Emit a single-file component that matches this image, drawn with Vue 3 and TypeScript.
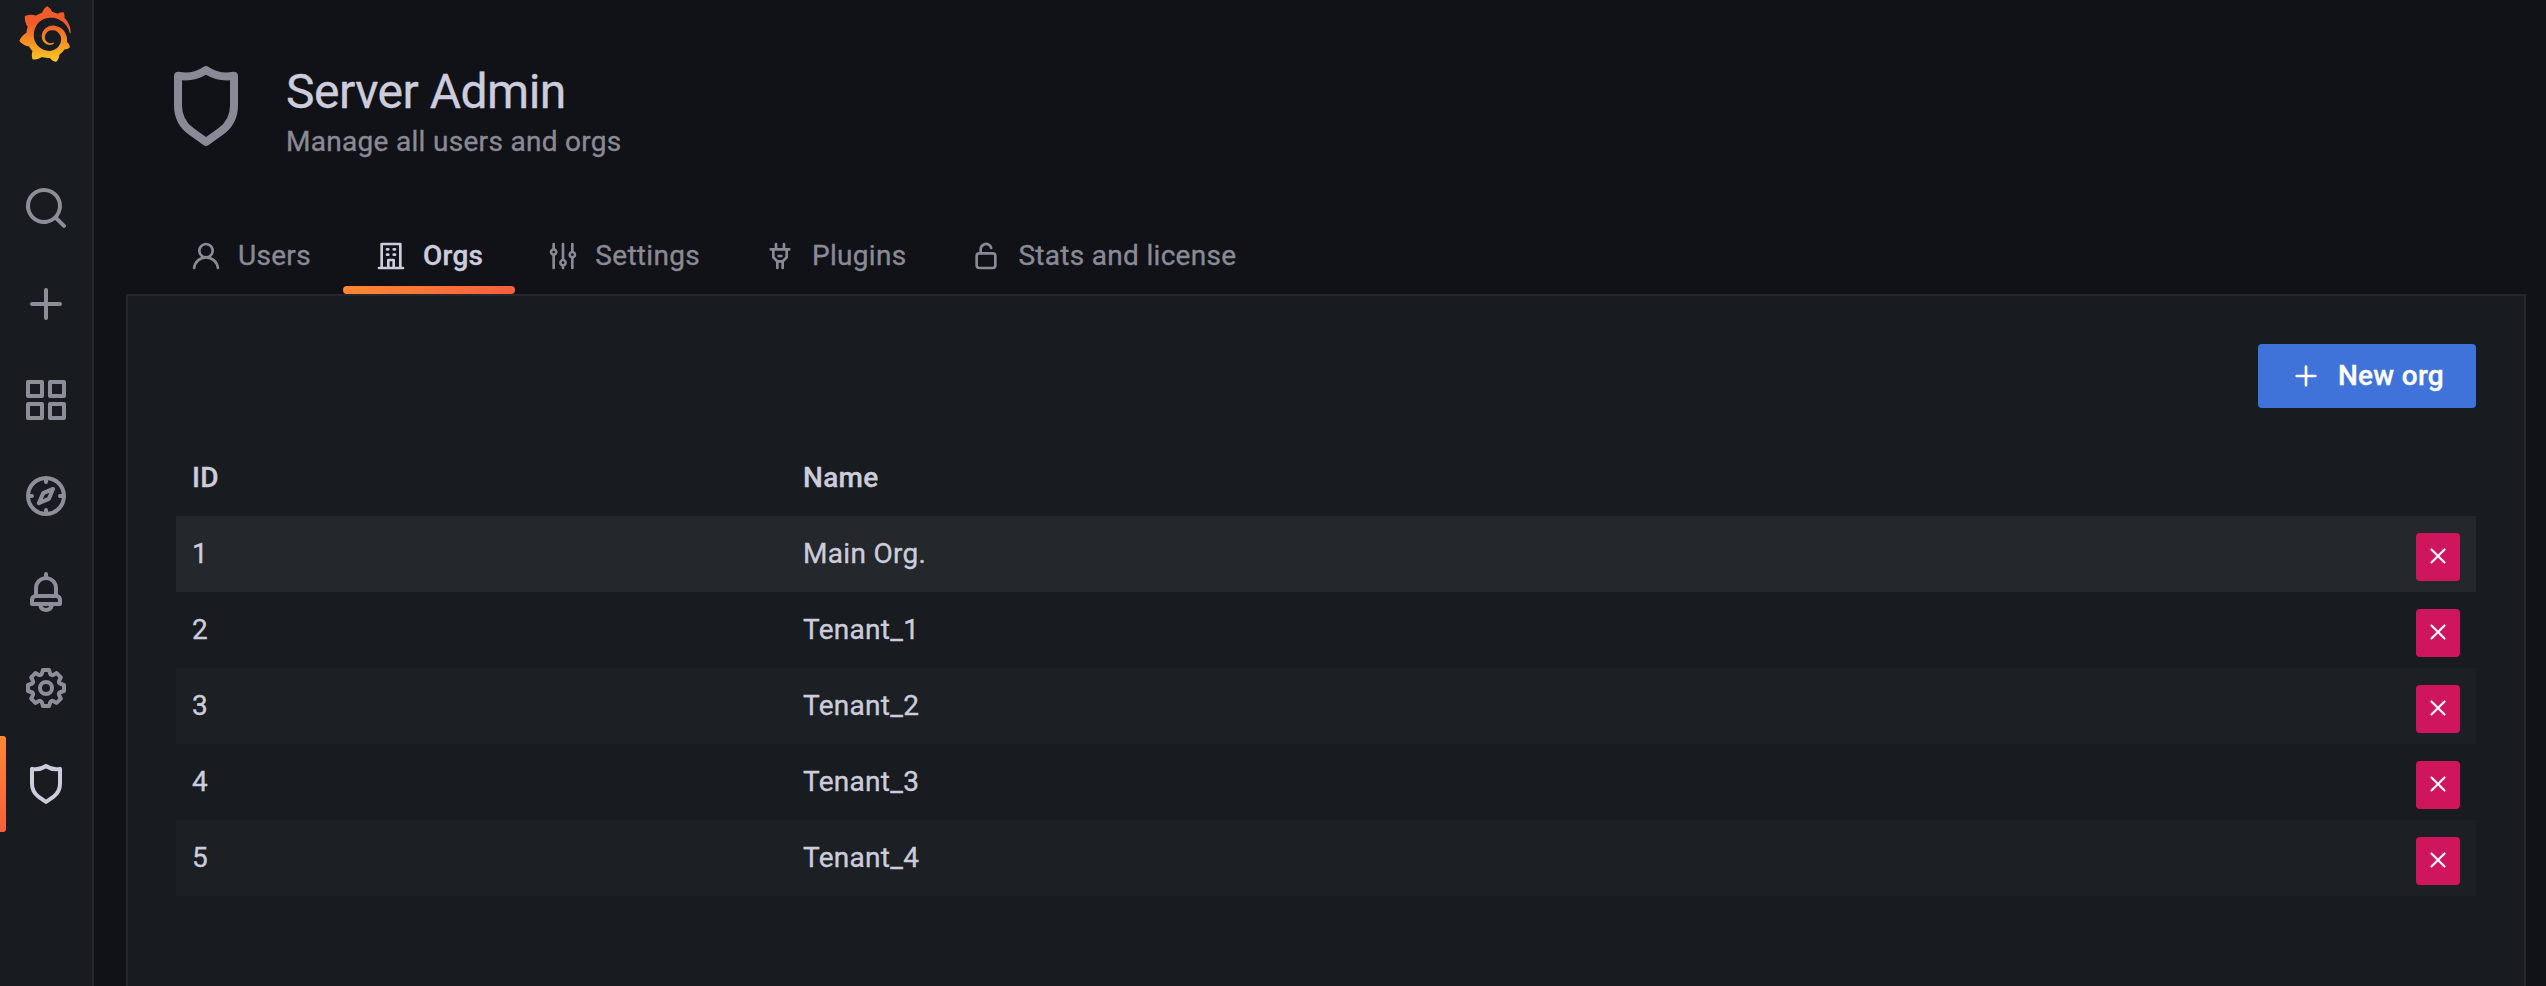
<script setup lang="ts">
interface Tab {
  label: string
  icon: string
  active?: boolean
}

interface Org {
  id: number
  name: string
}

const icons: Record<string, string> = {
  search:
    'M21.71,20.29,18,16.61A9,9,0,1,0,16.61,18l3.68,3.68a1,1,0,0,0,1.42,0A1,1,0,0,0,21.71,20.29ZM11,18a7,7,0,1,1,7-7A7,7,0,0,1,11,18Z',
  plus: 'M19,11H13V5a1,1,0,0,0-2,0v6H5a1,1,0,0,0,0,2h6v6a1,1,0,0,0,2,0V13h6a1,1,0,0,0,0-2Z',
  apps: 'M10,13H3a1,1,0,0,0-1,1v7a1,1,0,0,0,1,1h7a1,1,0,0,0,1-1V14A1,1,0,0,0,10,13ZM9,20H4V15H9ZM21,2H14a1,1,0,0,0-1,1v7a1,1,0,0,0,1,1h7a1,1,0,0,0,1-1V3A1,1,0,0,0,21,2ZM20,9H15V4h5Zm1,4H14a1,1,0,0,0-1,1v7a1,1,0,0,0,1,1h7a1,1,0,0,0,1-1V14A1,1,0,0,0,21,13Zm-1,7H15V15h5ZM10,2H3A1,1,0,0,0,2,3v7a1,1,0,0,0,1,1h7a1,1,0,0,0,1-1V3A1,1,0,0,0,10,2ZM9,9H4V4H9Z',
  compass:
    'M12,2A10,10,0,1,0,22,12,10,10,0,0,0,12,2Zm1,17.93V19a1,1,0,0,0-2,0v.93A8,8,0,0,1,4.07,13H5a1,1,0,0,0,0-2H4.07A8,8,0,0,1,11,4.07V5a1,1,0,0,0,2,0V4.07A8,8,0,0,1,19.93,11H19a1,1,0,0,0,0,2h.93A8,8,0,0,1,13,19.93ZM15.14,7.55l-5,2.12a1,1,0,0,0-.52.52l-2.12,5a1,1,0,0,0,.21,1.1,1,1,0,0,0,.7.3.93.93,0,0,0,.4-.09l5-2.12a1,1,0,0,0,.52-.52l2.12-5a1,1,0,0,0-1.31-1.31Zm-2.49,5.1-2.28,1,1-2.28,2.28-1Z',
  bell: 'M18,13.18V10a6,6,0,0,0-5-5.91V3a1,1,0,0,0-2,0V4.09A6,6,0,0,0,6,10v3.18A3,3,0,0,0,4,16v2a1,1,0,0,0,1,1H8.14a4,4,0,0,0,7.72,0H19a1,1,0,0,0,1-1V16A3,3,0,0,0,18,13.18ZM8,10a4,4,0,0,1,8,0v3H8Zm4,10a2,2,0,0,1-1.72-1h3.44A2,2,0,0,1,12,20Zm6-3H6V16a1,1,0,0,1,1-1H17a1,1,0,0,1,1,1Z',
  cog: 'M21.32,9.55l-1.89-.63.89-1.78A1,1,0,0,0,20.13,6L18,3.87a1,1,0,0,0-1.15-.19l-1.78.89-.63-1.89A1,1,0,0,0,13.5,2h-3a1,1,0,0,0-.95.68L8.92,4.57,7.14,3.68A1,1,0,0,0,6,3.87L3.87,6a1,1,0,0,0-.19,1.15l.89,1.78-1.89.63A1,1,0,0,0,2,10.5v3a1,1,0,0,0,.68.95l1.89.63-.89,1.78A1,1,0,0,0,3.87,18L6,20.13a1,1,0,0,0,1.15.19l1.78-.89.63,1.89a1,1,0,0,0,.95.68h3a1,1,0,0,0,.95-.68l.63-1.89,1.78.89A1,1,0,0,0,18,20.13L20.13,18a1,1,0,0,0,.19-1.15l-.89-1.78,1.89-.63A1,1,0,0,0,22,13.5v-3A1,1,0,0,0,21.32,9.55ZM20,12.78l-1.2.4A2,2,0,0,0,17.64,16l.57,1.14-1.1,1.1L16,17.64a2,2,0,0,0-2.79,1.16l-.4,1.2H11.22l-.4-1.2A2,2,0,0,0,8,17.64l-1.14.57-1.1-1.1L6.36,16A2,2,0,0,0,5.2,13.18L4,12.78V11.22l1.2-.4A2,2,0,0,0,6.36,8L5.79,6.89l1.1-1.1L8,6.36A2,2,0,0,0,10.82,5.2l.4-1.2h1.56l.4,1.2A2,2,0,0,0,16,6.36l1.14-.57,1.1,1.1L17.64,8a2,2,0,0,0,1.16,2.79l1.2.4ZM12,8a4,4,0,1,0,4,4A4,4,0,0,0,12,8Zm0,6a2,2,0,1,1,2-2A2,2,0,0,1,12,14Z',
  shield:
    'M19.63,3.65a1,1,0,0,0-.84-.2,8,8,0,0,1-6.22-1.27,1,1,0,0,0-1.14,0A8,8,0,0,1,5.21,3.45a1,1,0,0,0-.84.2A1,1,0,0,0,4,4.43v7.45a9,9,0,0,0,3.77,7.33l3.65,2.6a1,1,0,0,0,1.16,0l3.65-2.6A9,9,0,0,0,20,11.88V4.43A1,1,0,0,0,19.63,3.65ZM18,11.88a7,7,0,0,1-2.93,5.7L12,19.77,8.93,17.58A7,7,0,0,1,6,11.88V5.58a10,10,0,0,0,6-1.39,10,10,0,0,0,6,1.39Z',
  user: 'M15.71,12.71a6,6,0,1,0-7.42,0,10,10,0,0,0-6.22,8.18,1,1,0,0,0,2,.22,8,8,0,0,1,15.9,0,1,1,0,0,0,1,.89h.11a1,1,0,0,0,.88-1.1A10,10,0,0,0,15.71,12.71ZM12,12a4,4,0,1,1,4-4A4,4,0,0,1,12,12Z',
  building:
    'M14,8h1a1,1,0,0,0,0-2H14a1,1,0,0,0,0,2Zm0,4h1a1,1,0,0,0,0-2H14a1,1,0,0,0,0,2ZM9,8h1a1,1,0,0,0,0-2H9A1,1,0,0,0,9,8Zm0,4h1a1,1,0,0,0,0-2H9a1,1,0,0,0,0,2Zm12,8H20V3a1,1,0,0,0-1-1H5A1,1,0,0,0,4,3V20H3a1,1,0,0,0,0,2H21a1,1,0,0,0,0-2Zm-8,0H11V16h2Zm5,0H15V15a1,1,0,0,0-1-1H10a1,1,0,0,0-1,1v5H6V4H18Z',
  sliders:
    'M20,8.18V3a1,1,0,0,0-2,0V8.18a3,3,0,0,0,0,5.64V21a1,1,0,0,0,2,0V13.82a3,3,0,0,0,0-5.64ZM19,12a1,1,0,1,1,1-1A1,1,0,0,1,19,12Zm-6,2.18V3a1,1,0,0,0-2,0V14.18a3,3,0,0,0,0,5.64V21a1,1,0,0,0,2,0V19.82a3,3,0,0,0,0-5.64ZM12,18a1,1,0,1,1,1-1A1,1,0,0,1,12,18ZM6,6.18V3A1,1,0,0,0,4,3V6.18a3,3,0,0,0,0,5.64V21a1,1,0,0,0,2,0V11.82A3,3,0,0,0,6,6.18ZM5,10A1,1,0,1,1,6,9,1,1,0,0,1,5,10Z',
  plug: 'M19,6H16V3a1,1,0,0,0-2,0V6H10V3A1,1,0,0,0,8,3V6H5A1,1,0,0,0,5,8H6v5a1,1,0,0,0,.29.71L9,16.41V21a1,1,0,0,0,2,0V17h2v4a1,1,0,0,0,2,0V16.41l2.71-2.7A1,1,0,0,0,18,13V8h1a1,1,0,0,0,0-2Zm-3,6.59L13.59,15H10.41L8,12.59V8h8ZM11,13h2a1,1,0,0,0,0-2H11a1,1,0,0,0,0,2Z',
  unlock:
    'M17,9H9V7a3,3,0,0,1,5.12-2.13,3.08,3.08,0,0,1,.78,1.38,1,1,0,1,0,1.94-.5,5.09,5.09,0,0,0-1.31-2.29A5,5,0,0,0,7,7V9a3,3,0,0,0-3,3v7a3,3,0,0,0,3,3H17a3,3,0,0,0,3-3V12A3,3,0,0,0,17,9Zm1,10a1,1,0,0,1-1,1H7a1,1,0,0,1-1-1V12a1,1,0,0,1,1-1H17a1,1,0,0,1,1,1Z',
  times:
    'M13.41,12l6.3-6.29a1,1,0,1,0-1.42-1.42L12,10.59,5.71,4.29A1,1,0,0,0,4.29,5.71L10.59,12l-6.3,6.29a1,1,0,0,0,0,1.42,1,1,0,0,0,1.42,0L12,13.41l6.29,6.3a1,1,0,0,0,1.42,0,1,1,0,0,0,0-1.42Z',
}

const logoPath =
  'M342,161.2c-0.6-6.1-1.6-13.1-3.6-20.9c-2-7.7-5-16.2-9.4-25c-4.4-8.8-10.1-17.9-17.5-26.8c-2.9-3.5-6.1-6.9-9.5-10.2c5.1-20.3-6.2-37.9-6.2-37.9c-19.5-1.2-31.9,6.1-36.5,9.4c-0.8-0.3-1.5-0.7-2.3-1c-3.3-1.3-6.7-2.6-10.3-3.7c-3.5-1.1-7.1-2.1-10.8-3c-3.7-0.9-7.4-1.6-11.2-2.2c-0.7-0.1-1.3-0.2-2-0.3c-8.5-27.2-32.9-38.6-32.9-38.6c-27.3,17.3-32.4,41.5-32.4,41.5s-0.1,0.5-0.3,1.4c-1.5,0.4-3,0.9-4.5,1.3c-2.1,0.6-4.2,1.4-6.2,2.2c-2.1,0.8-4.1,1.6-6.2,2.5c-4.1,1.8-8.2,3.8-12.2,6c-3.9,2.2-7.7,4.6-11.4,7.1c-0.5-0.2-1-0.4-1-0.4c-37.8-14.4-71.3,2.9-71.3,2.9c-3.1,40.2,15.1,65.5,18.7,70.1c-0.9,2.5-1.7,5-2.5,7.5c-2.8,9.1-4.9,18.4-6.2,28.1c-0.2,1.4-0.4,2.8-0.5,4.2C18.8,192.7,8.5,228,8.5,228c29.1,33.5,63.1,35.6,63.1,35.6c0,0,0.1-0.1,0.1-0.1c4.3,7.7,9.3,15,14.9,21.9c2.4,2.9,4.8,5.6,7.4,8.3c-10.6,30.4,1.5,55.6,1.5,55.6c32.4,1.2,53.7-14.2,58.2-17.7c3.2,1.1,6.5,2.1,9.8,2.9c10,2.6,20.2,4.1,30.4,4.5c2.5,0.1,5.1,0.2,7.6,0.1l1.2,0l0.8,0l1.6,0l1.6-0.1l0,0.1c15.3,21.8,42.1,24.9,42.1,24.9c19.1-20.1,20.2-40.1,20.2-44.4l0,0c0,0,0-0.1,0-0.3c0-0.4,0-0.6,0-0.6l0,0c0-0.3,0-0.6,0-0.9c4-2.8,7.8-5.8,11.4-9.1c7.6-6.9,14.3-14.8,19.9-23.3c0.5-0.8,1-1.6,1.5-2.4c21.6,1.2,36.9-13.4,36.9-13.4c-3.6-22.5-16.4-33.5-19.1-35.6l0,0c0,0-0.1-0.1-0.3-0.2c-0.2-0.1-0.2-0.2-0.2-0.2c0,0,0,0,0,0c-0.1-0.1-0.3-0.2-0.5-0.3c0.1-1.4,0.2-2.7,0.3-4.1c0.2-2.4,0.2-4.9,0.2-7.3l0-1.8l0-0.9l0-0.5c0-0.6,0-0.4,0-0.6l-0.1-1.5l-0.1-2c0-0.7-0.1-1.3-0.2-1.9c-0.1-0.6-0.1-1.3-0.2-1.9l-0.2-1.9l-0.3-1.9c-0.4-2.5-0.8-4.9-1.4-7.4c-2.3-9.7-6.1-18.9-11-27.2c-5-8.3-11.2-15.6-18.3-21.8c-7-6.2-14.9-11.2-23.1-14.9c-8.3-3.7-16.9-6.1-25.5-7.2c-4.3-0.6-8.6-0.8-12.9-0.7l-1.6,0l-0.4,0c-0.1,0-0.6,0-0.5,0l-0.7,0l-1.6,0.1c-0.6,0-1.2,0.1-1.7,0.1c-2.2,0.2-4.4,0.5-6.5,0.9c-8.6,1.6-16.7,4.7-23.8,9c-7.1,4.3-13.3,9.6-18.3,15.6c-5,6-8.9,12.7-11.6,19.6c-2.7,6.9-4.2,14.1-4.6,21c-0.1,1.7-0.1,3.5-0.1,5.2c0,0.4,0,0.9,0,1.3l0.1,1.4c0.1,0.8,0.1,1.7,0.2,2.5c0.3,3.5,1,6.9,1.9,10.1c1.9,6.5,4.9,12.4,8.6,17.4c3.7,5,8.2,9.1,12.9,12.4c4.7,3.2,9.8,5.5,14.8,7c5,1.5,10,2.1,14.7,2.1c0.6,0,1.2,0,1.7,0c0.3,0,0.6,0,0.9,0c0.3,0,0.6,0,0.9-0.1c0.5,0,1-0.1,1.5-0.1c0.1,0,0.3,0,0.4-0.1l0.5-0.1c0.3,0,0.6-0.1,0.9-0.1c0.6-0.1,1.1-0.2,1.7-0.3c0.6-0.1,1.1-0.2,1.6-0.4c1.1-0.2,2.1-0.6,3.1-0.9c2-0.7,4-1.5,5.7-2.4c1.8-0.9,3.4-2,5-3c0.4-0.3,0.9-0.6,1.3-1c1.6-1.3,1.9-3.7,0.6-5.3c-1.1-1.4-3.1-1.8-4.7-0.9c-0.4,0.2-0.8,0.4-1.2,0.6c-1.4,0.7-2.8,1.3-4.3,1.8c-1.5,0.5-3.1,0.9-4.7,1.2c-0.8,0.1-1.6,0.2-2.5,0.3c-0.4,0-0.8,0.1-1.3,0.1c-0.4,0-0.9,0-1.2,0c-0.4,0-0.8,0-1.2,0c-0.5,0-1,0-1.5-0.1c0,0-0.3,0-0.1,0l-0.2,0l-0.3,0c-0.2,0-0.5,0-0.7-0.1c-0.5-0.1-0.9-0.1-1.4-0.2c-3.7-0.5-7.4-1.6-10.9-3.2c-3.6-1.6-7-3.8-10.1-6.6c-3.1-2.8-5.8-6.1-7.9-9.9c-2.1-3.8-3.6-8-4.3-12.4c-0.3-2.2-0.5-4.5-0.4-6.7c0-0.6,0.1-1.2,0.1-1.8c0,0.2,0-0.1,0-0.1l0-0.2l0-0.5c0-0.3,0.1-0.6,0.1-0.9c0.1-1.2,0.3-2.4,0.5-3.6c1.7-9.6,6.5-19,13.9-26.1c1.9-1.8,3.9-3.4,6-4.9c2.1-1.5,4.4-2.8,6.8-3.9c2.4-1.1,4.8-2,7.4-2.7c2.5-0.7,5.1-1.1,7.8-1.4c1.3-0.1,2.6-0.2,4-0.2c0.4,0,0.6,0,0.9,0l1.1,0l0.7,0c0.3,0,0,0,0.1,0l0.3,0l1.1,0.1c2.9,0.2,5.7,0.6,8.5,1.3c5.6,1.2,11.1,3.3,16.2,6.1c10.2,5.7,18.9,14.5,24.2,25.1c2.7,5.3,4.6,11,5.5,16.9c0.2,1.5,0.4,3,0.5,4.5l0.1,1.1l0.1,1.1c0,0.4,0,0.8,0,1.1c0,0.4,0,0.8,0,1.1l0,1l0,1.1c0,0.7-0.1,1.9-0.1,2.6c-0.1,1.6-0.3,3.3-0.5,4.9c-0.2,1.6-0.5,3.2-0.8,4.8c-0.3,1.6-0.7,3.2-1.1,4.7c-0.8,3.1-1.8,6.2-3,9.3c-2.4,6-5.6,11.8-9.4,17.1c-7.7,10.6-18.2,19.2-30.2,24.7c-6,2.7-12.3,4.7-18.8,5.7c-3.2,0.6-6.5,0.9-9.8,1l-0.6,0l-0.5,0l-1.1,0l-1.6,0l-0.8,0c0.4,0-0.1,0-0.1,0l-0.3,0c-1.8,0-3.5-0.1-5.3-0.3c-7-0.5-13.9-1.8-20.7-3.7c-6.7-1.9-13.2-4.6-19.4-7.8c-12.3-6.6-23.4-15.6-32-26.5c-4.3-5.4-8.1-11.3-11.2-17.4c-3.1-6.1-5.6-12.6-7.4-19.1c-1.8-6.6-2.9-13.3-3.4-20.1l-0.1-1.3l0-0.3l0-0.3l0-0.6l0-1.1l0-0.3l0-0.4l0-0.8l0-1.6l0-0.3c0,0,0,0.1,0-0.1l0-0.6c0-0.8,0-1.7,0-2.5c0.1-3.3,0.4-6.8,0.8-10.2c0.4-3.4,1-6.9,1.7-10.3c0.7-3.4,1.5-6.8,2.5-10.2c1.9-6.7,4.3-13.2,7.1-19.3c5.7-12.2,13.1-23.1,22-31.8c2.2-2.2,4.5-4.2,6.9-6.2c2.4-1.9,4.9-3.7,7.5-5.4c2.5-1.7,5.2-3.2,7.9-4.6c1.3-0.7,2.7-1.4,4.1-2c0.7-0.3,1.4-0.6,2.1-0.9c0.7-0.3,1.4-0.6,2.1-0.9c2.8-1.2,5.7-2.2,8.7-3.1c0.7-0.2,1.5-0.4,2.2-0.7c0.7-0.2,1.5-0.4,2.2-0.6c1.5-0.4,3-0.8,4.5-1.1c0.7-0.2,1.5-0.3,2.3-0.5c0.8-0.2,1.5-0.3,2.3-0.5c0.8-0.1,1.5-0.3,2.3-0.4l1.1-0.2l1.2-0.2c0.8-0.1,1.5-0.2,2.3-0.3c0.9-0.1,1.7-0.2,2.6-0.3c0.7-0.1,1.9-0.2,2.6-0.3c0.5-0.1,1.1-0.1,1.6-0.2l1.1-0.1l0.5-0.1l0.6,0c0.9-0.1,1.7-0.1,2.6-0.2l1.3-0.1c0,0,0.5,0,0.1,0l0.3,0l0.6,0c0.7,0,1.5-0.1,2.2-0.1c2.9-0.1,5.9-0.1,8.8,0c5.8,0.2,11.5,0.9,17,1.9c11.1,2.1,21.5,5.6,31,10.3c9.5,4.6,17.9,10.3,25.3,16.5c0.5,0.4,0.9,0.8,1.4,1.2c0.4,0.4,0.9,0.8,1.3,1.2c0.9,0.8,1.7,1.6,2.6,2.4c0.9,0.8,1.7,1.6,2.5,2.4c0.8,0.8,1.6,1.6,2.4,2.5c3.1,3.3,6,6.6,8.6,10c5.2,6.7,9.4,13.5,12.7,19.9c0.2,0.4,0.4,0.8,0.6,1.2c0.2,0.4,0.4,0.8,0.6,1.2c0.4,0.8,0.8,1.6,1.1,2.4c0.4,0.8,0.7,1.5,1.1,2.3c0.3,0.8,0.7,1.5,1,2.3c1.2,3,2.4,5.9,3.3,8.6c1.5,4.4,2.6,8.3,3.5,11.7c0.3,1.4,1.6,2.3,3,2.1c1.5-0.1,2.6-1.3,2.6-2.8C342.6,170.4,342.5,166.1,342,161.2z'

const navItems: string[] = ['search', 'plus', 'apps', 'compass', 'bell', 'cog', 'shield']
const activeNav = 'shield'

const tabs: Tab[] = [
  { label: 'Users', icon: 'user' },
  { label: 'Orgs', icon: 'building', active: true },
  { label: 'Settings', icon: 'sliders' },
  { label: 'Plugins', icon: 'plug' },
  { label: 'Stats and license', icon: 'unlock' },
]

const orgs: Org[] = [
  { id: 1, name: 'Main Org.' },
  { id: 2, name: 'Tenant_1' },
  { id: 3, name: 'Tenant_2' },
  { id: 4, name: 'Tenant_3' },
  { id: 5, name: 'Tenant_4' },
]
</script>

<template>
  <div class="app">
    <aside class="sidebar">
      <svg class="logo" viewBox="0 0 351 365">
        <defs>
          <linearGradient id="logo-fill" gradientUnits="userSpaceOnUse" x1="175.5" y1="445.5" x2="175.5" y2="114">
            <stop offset="0" stop-color="#fcee1f" />
            <stop offset="1" stop-color="#f15b2a" />
          </linearGradient>
        </defs>
        <path :d="logoPath" fill="url(#logo-fill)" />
      </svg>
      <nav class="nav">
        <a v-for="item in navItems" :key="item" class="nav-item" :class="{ active: item === activeNav }">
          <svg class="icon nav-icon" viewBox="0 0 24 24"><path :d="icons[item]" /></svg>
        </a>
      </nav>
    </aside>

    <main class="main">
      <header class="page-header">
        <svg class="icon page-icon" viewBox="0 0 24 24"><path :d="icons.shield" /></svg>
        <div class="page-titles">
          <h1 class="title">Server Admin</h1>
          <div class="subtitle">Manage all users and orgs</div>
        </div>
      </header>

      <nav class="tabs">
        <a v-for="tab in tabs" :key="tab.label" class="tab" :class="{ active: tab.active }">
          <svg class="icon tab-icon" viewBox="0 0 24 24"><path :d="icons[tab.icon]" /></svg>
          <span>{{ tab.label }}</span>
        </a>
      </nav>

      <section class="panel">
        <div class="actions">
          <button class="btn-primary" type="button">
            <svg class="icon btn-icon" viewBox="0 0 24 24"><path :d="icons.plus" /></svg>
            <span>New org</span>
          </button>
        </div>

        <table class="orgs">
          <colgroup>
            <col class="col-id" />
            <col />
            <col class="col-action" />
          </colgroup>
          <thead>
            <tr>
              <th>ID</th>
              <th>Name</th>
              <th></th>
            </tr>
          </thead>
          <tbody>
            <tr v-for="org in orgs" :key="org.id" :class="{ hovered: org.id === 1 }">
              <td>{{ org.id }}</td>
              <td>{{ org.name }}</td>
              <td class="cell-action">
                <button class="btn-delete" type="button" aria-label="Delete org">
                  <svg class="icon delete-icon" viewBox="0 0 24 24"><path :d="icons.times" /></svg>
                </button>
              </td>
            </tr>
          </tbody>
        </table>
      </section>
    </main>
  </div>
</template>

<style>
html,
body {
  background: #111217;
}
</style>

<style scoped>
.app {
  display: flex;
  height: 986px;
  overflow: hidden;
  background: #111217;
  color: #ccccdc;
  font-family: Roboto, 'Liberation Sans', sans-serif;
  font-size: 28px;
  line-height: 44px;
  letter-spacing: 0.3px;
  -webkit-text-stroke: 0.35px currentColor;
}

.icon {
  display: block;
  flex: none;
  fill: currentColor;
}

.sidebar {
  box-sizing: border-box;
  flex: none;
  width: 94px;
  border-right: 2px solid #25272c;
  background: #181b1f;
}

.logo {
  display: block;
  width: 54px;
  height: 56px;
  margin: 6px 0 98px 18px;
}

.nav-item {
  position: relative;
  display: flex;
  align-items: center;
  justify-content: center;
  height: 96px;
  color: #8e8e9a;
}

.nav-item.active {
  color: #ccccdc;
}

.nav-item.active::before {
  content: '';
  position: absolute;
  top: 0;
  left: 0;
  width: 6px;
  height: 96px;
  border-radius: 0 3px 3px 0;
  background: linear-gradient(180deg, #ff8833, #f55f3e);
}

.nav-icon {
  width: 48px;
  height: 48px;
}

.main {
  display: flex;
  flex: 1;
  flex-direction: column;
  padding: 58px 20px 0 32px;
}

.page-header {
  display: flex;
  height: 160px;
  padding-left: 32px;
}

.page-icon {
  width: 96px;
  height: 96px;
  color: #8a8a96;
}

.page-titles {
  padding-left: 32px;
}

.title {
  margin: 4px 0 0;
  font-size: 48px;
  font-weight: 400;
  line-height: 60px;
  letter-spacing: -0.5px;
}

.subtitle {
  margin-top: -2px;
  color: #8a8a96;
}

.tabs {
  display: flex;
  height: 76px;
  padding-left: 32px;
}

.tab {
  position: relative;
  display: flex;
  align-items: center;
  gap: 16px;
  padding: 0 32px;
  color: #8a8a96;
  white-space: nowrap;
}

.tab.active {
  color: #ccccdc;
  font-weight: 500;
}

.tab.active::before {
  content: '';
  position: absolute;
  right: 0;
  bottom: 0;
  left: 0;
  height: 8px;
  border-radius: 4px;
  background: linear-gradient(90deg, #ff8833, #f55f3e);
}

.tab-icon,
.btn-icon {
  width: 32px;
  height: 32px;
}

.panel {
  flex: 1;
  border: 2px solid #25272c;
  border-bottom: 0;
  padding: 48px 48px 0;
  background: #181b1f;
}

.actions {
  display: flex;
  justify-content: flex-end;
  margin-bottom: 32px;
}

.btn-primary {
  display: flex;
  align-items: center;
  gap: 16px;
  height: 64px;
  padding: 0 32px;
  border: 0;
  border-radius: 4px;
  background: #3f73d9;
  color: #fff;
  font: inherit;
  font-weight: 500;
  letter-spacing: 0.3px;
}

.orgs {
  width: 100%;
  border-collapse: collapse;
  table-layout: fixed;
}

.col-id {
  width: 611px;
}

.col-action {
  width: 76px;
}

th,
td {
  height: 76px;
  box-sizing: border-box;
  padding: 0 16px;
  text-align: left;
  vertical-align: middle;
}

th {
  font-weight: 500;
}

tbody tr:nth-child(odd) {
  background: #1c1f23;
}

tbody tr.hovered {
  background: #24272b;
}

.cell-action {
  padding-top: 6px;
}

.btn-delete {
  display: flex;
  align-items: center;
  justify-content: center;
  width: 44px;
  height: 48px;
  padding: 0 0 2px;
  border: 0;
  border-radius: 4px;
  background: #cf165c;
  color: #fff;
}

.delete-icon {
  width: 22px;
  height: 22px;
  stroke: currentColor;
  stroke-width: 0.5;
}
</style>
